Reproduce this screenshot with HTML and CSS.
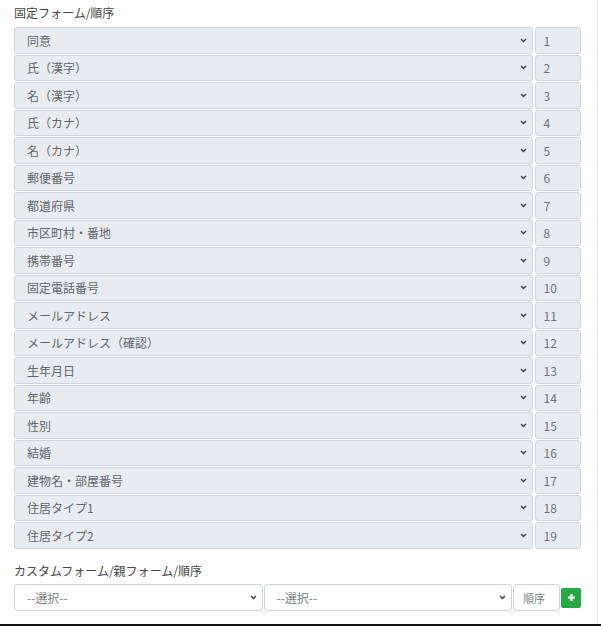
FILE: index.html
```html
<!DOCTYPE html>
<html lang="ja">
<head>
    <meta charset="UTF-8">
    <meta name="viewport" content="width=device-width, initial-scale=1.0">
    <title>フォーム設定</title>
    <link rel="stylesheet" href="styles.css">
</head>
<body>
    <div class="page">
        <div class="panel">
            <div class="label">固定フォーム/順序</div>
            <div class="fixed-list" id="fixed"></div>

            <div class="label label-custom">カスタムフォーム/親フォーム/順序</div>
            <div class="custom-row">
                <div class="select">
                    <span class="placeholder">--選択--</span>
                    <svg class="chev" width="7" height="5" viewBox="0 0 7 5"><path d="M1 1 L3.5 3.5 L6 1" fill="none" stroke="#3a3f44" stroke-width="1.4"/></svg>
                </div>
                <div class="select">
                    <span class="placeholder">--選択--</span>
                    <svg class="chev" width="7" height="5" viewBox="0 0 7 5"><path d="M1 1 L3.5 3.5 L6 1" fill="none" stroke="#3a3f44" stroke-width="1.4"/></svg>
                </div>
                <div class="order-input">順序</div>
                <button class="add-btn" aria-label="追加">
                    <svg width="9" height="9" viewBox="0 0 9 9"><path d="M4.5 1 V8 M1 4.5 H8" stroke="#fff" stroke-width="2.2"/></svg>
                </button>
            </div>
        </div>
    </div>

    <script>
        let items = ['同意', '氏（漢字）', '名（漢字）', '氏（カナ）', '名（カナ）', '郵便番号', '都道府県',
            '市区町村・番地', '携帯番号', '固定電話番号', 'メールアドレス', 'メールアドレス（確認）',
            '生年月日', '年齢', '性別', '結婚', '建物名・部屋番号', '住居タイプ1', '住居タイプ2'];

        let html = '';
        items.forEach(function (name, i) {
            html += `<div class="select disabled"><span>${name}</span>` +
                `<svg class="chev" width="7" height="5" viewBox="0 0 7 5"><path d="M1 1 L3.5 3.5 L6 1" fill="none" stroke="#3a3f44" stroke-width="1.4"/></svg></div>` +
                `<div class="num">${i + 1}</div>`;
        });
        document.querySelector('#fixed').innerHTML = html;
    </script>
</body>
</html>
```

FILE: styles.css
```css
body {
    margin: 0;
    font-family: "Noto Sans CJK JP", "Noto Sans", sans-serif;
    background: #fff;
}

.page {
    width: 601px;
    height: 626px;
    box-sizing: border-box;
    border-bottom: 2px solid #111;
    overflow: hidden;
}

.panel {
    width: 598px;
    height: 624px;
    box-sizing: border-box;
    border-right: 1px solid #e6e6e6;
    padding: 4px 16px 0 14px;
}

.label {
    font-size: 12px;
    line-height: 18px;
    color: #444;
    margin-bottom: 5px;
}

.label-custom {
    margin-top: 13.5px;
    margin-bottom: 4px;
}

.fixed-list {
    display: grid;
    grid-template-columns: 1fr 46.5px;
    grid-auto-rows: 26.5px;
    column-gap: 1.5px;
    row-gap: 1px;
}

.select {
    display: flex;
    align-items: center;
    justify-content: space-between;
    box-sizing: border-box;
    height: 100%;
    padding: 0 5px 0 12px;
    border: 1px solid #ced4da;
    border-radius: 3px;
    font-size: 12px;
    color: #60666b;
    background: #fff;
}

.select.disabled {
    background: #e9ecef;
}

.chev {
    flex: none;
}

.num {
    display: flex;
    align-items: center;
    box-sizing: border-box;
    padding-left: 8px;
    border: 1px solid #ced4da;
    border-radius: 3px;
    background: #e9ecef;
    font-size: 12px;
    color: #6c737a;
}

.custom-row {
    display: flex;
    align-items: center;
    height: 27px;
}

.custom-row .select {
    flex: 1;
    margin-right: 1px;
}

.placeholder {
    color: #7a8086;
}

.order-input {
    width: 47px;
    height: 100%;
    box-sizing: border-box;
    display: flex;
    align-items: center;
    padding-left: 9px;
    border: 1px solid #ced4da;
    border-radius: 3px;
    font-size: 11px;
    color: #7a8086;
}

.add-btn {
    width: 20px;
    height: 20px;
    margin-left: 1px;
    padding: 0;
    border: none;
    border-radius: 2px;
    background-color: #28a745;
    display: flex;
    align-items: center;
    justify-content: center;
    cursor: pointer;
}
```
